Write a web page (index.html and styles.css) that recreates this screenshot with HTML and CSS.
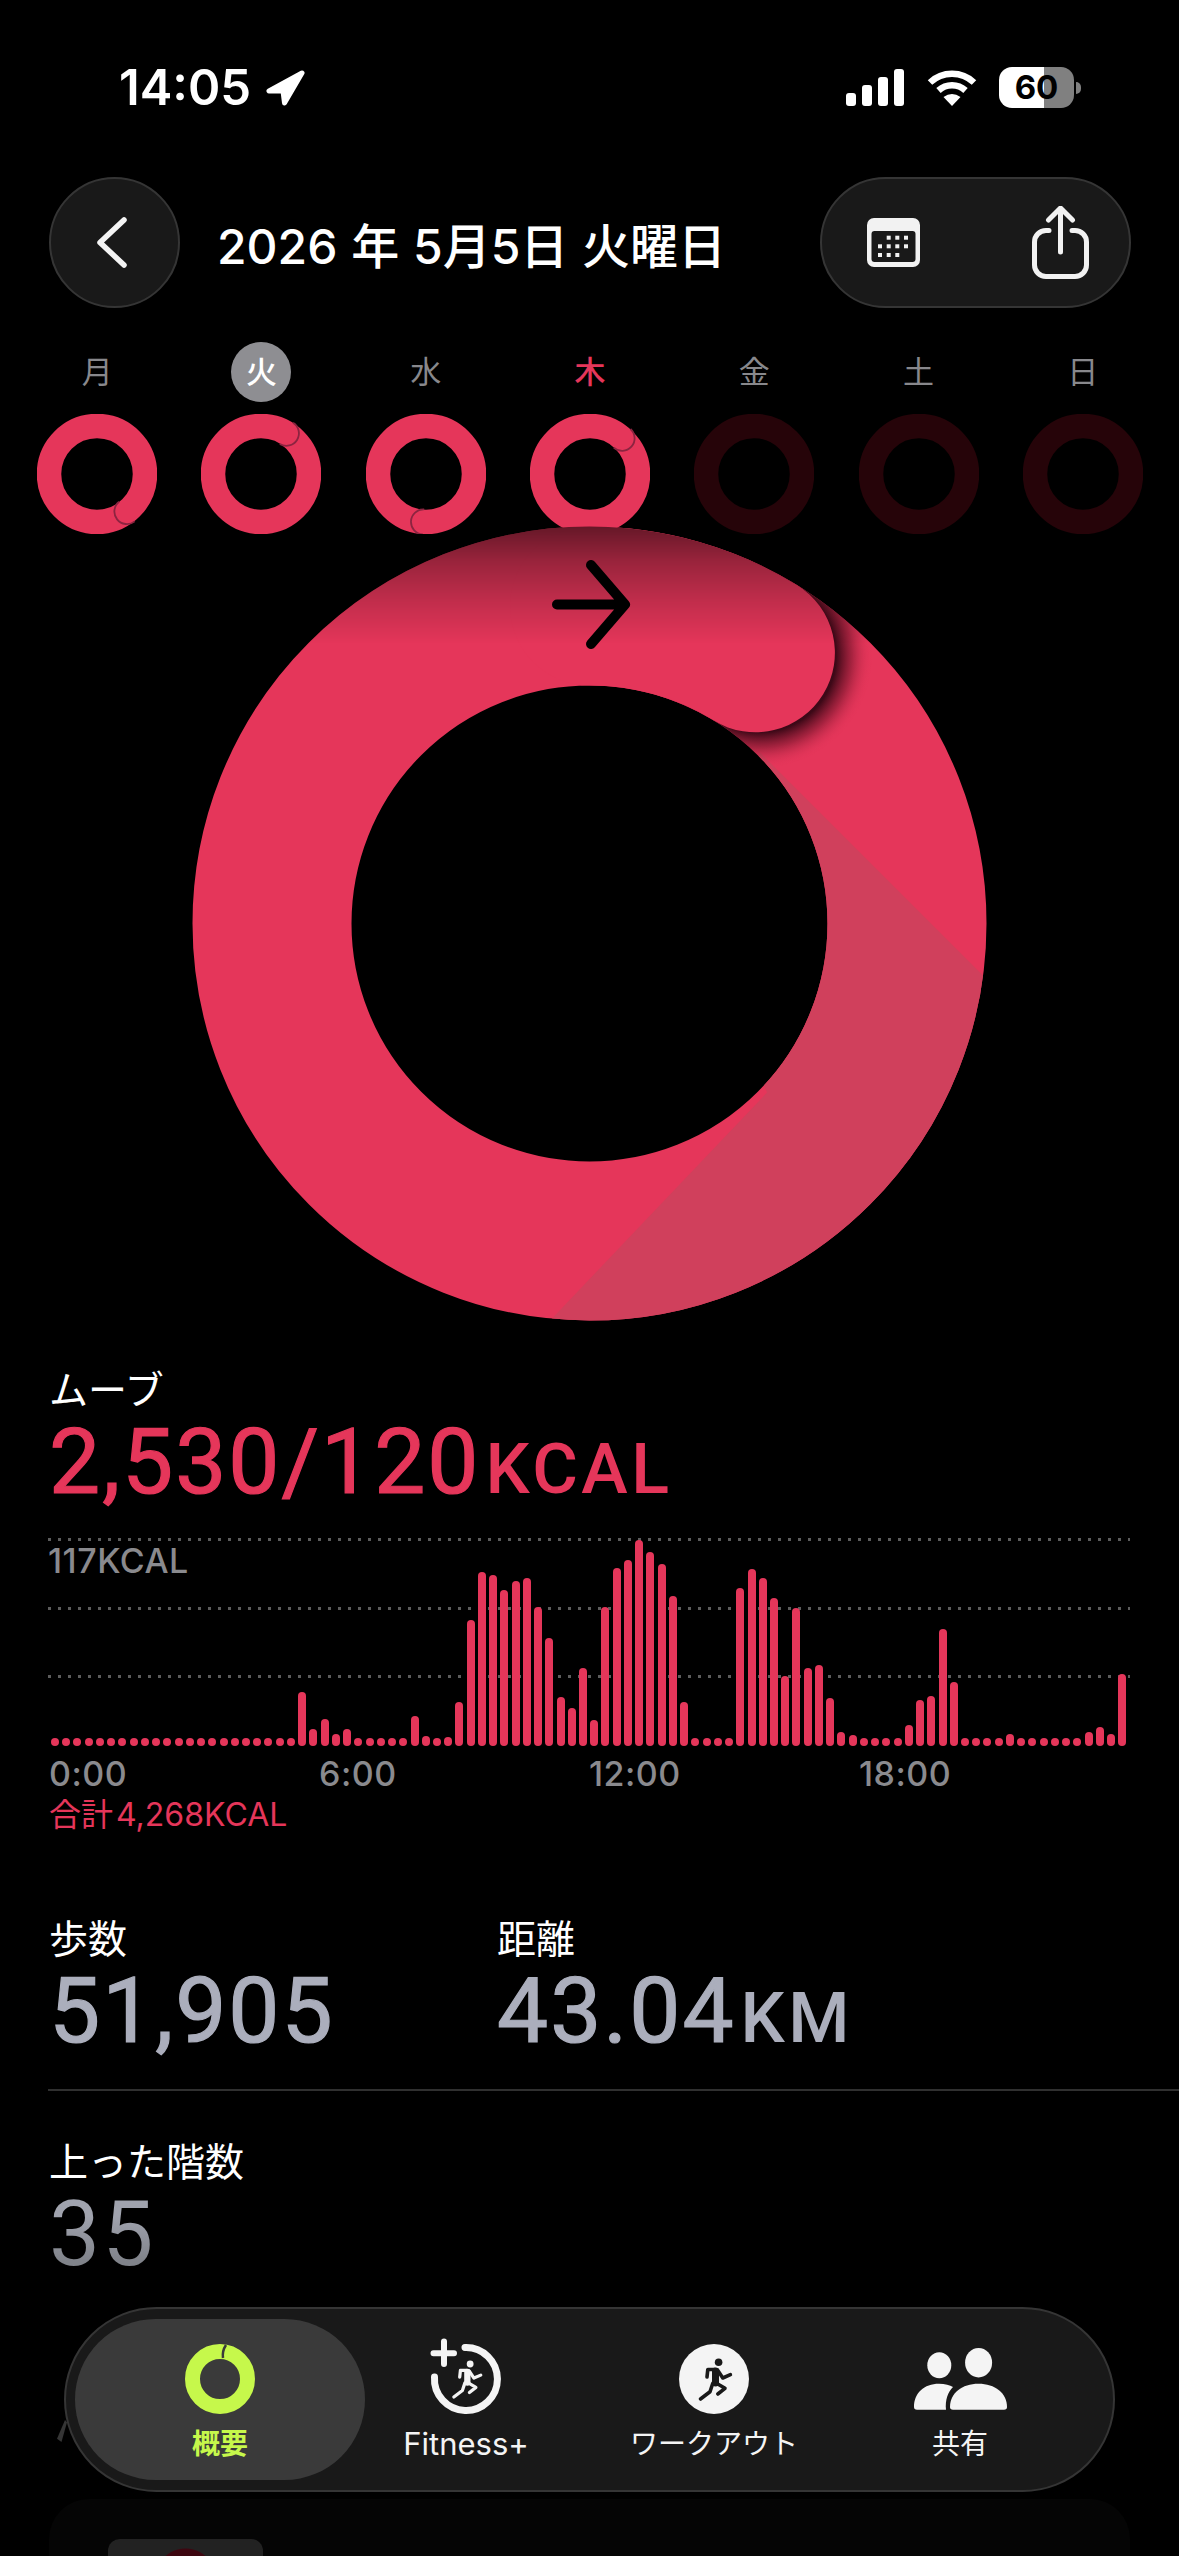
FILE: index.html
```html
<!DOCTYPE html>
<html lang="ja">
  <head>
    <meta charset="UTF-8" />
    <meta name="viewport" content="width=device-width, initial-scale=1.0" />
    <title>アクティビティ</title>
    <link rel="stylesheet" href="styles.css">
  </head>
  <body>
    <svg class="defs" width="0" height="0">
      <symbol id="runner" viewBox="0 0 70 70" overflow="visible">
        <circle class="runner-head" cx="39.6" cy="18.3" r="3.8" />
        <path class="runner-body" d="M36.5 27V39" />
        <path class="runner-limb" d="M36 25.5H28.8L28 33M38.5 26L43.8 34L51.4 30.7M37.5 39.3L46 44.3L38.8 50M33.8 39.3L31 47.7L21.5 55" />
      </symbol>
    </svg>

    <div class="status">
      <div class="clock">
        <span>14:05</span>
        <svg class="loc" viewBox="0 0 39 36"><path d="M36 3L3 21H17L18.500 33Z" /></svg>
      </div>
      <div class="status-right">
        <svg class="signal" viewBox="0 0 58 37">
          <rect x="0" y="24" width="10" height="13" rx="3" />
          <rect x="16" y="16" width="10" height="21" rx="3" />
          <rect x="32" y="8" width="10" height="29" rx="3" />
          <rect x="48" y="0" width="10" height="37" rx="3" />
        </svg>
        <svg class="wifi" viewBox="0 0 50 37">
          <path class="wifi-arc" d="M3 13.500A32 32 0 0 1 47 13.500" />
          <path class="wifi-arc" d="M11.500 21.500A20 20 0 0 1 38.500 21.500" />
          <path d="M16.500 28Q25 22 33.500 28L25 37Z" />
        </svg>
        <div class="battery">60</div>
        <div class="battery-nub"></div>
      </div>
    </div>

    <div class="header">
      <button class="glass back">
        <svg viewBox="0 0 30 51"><path d="M27 3L3 25.500L27 48" /></svg>
      </button>
      <div class="title">2026 年 5月5日 火曜日</div>
      <div class="glass actions">
        <svg class="calendar" viewBox="0 0 53 49">
          <rect class="cal-body" width="53" height="49" rx="7" />
          <rect class="cal-inner" x="4.500" y="13" width="44" height="31" rx="3" />
          <g class="cal-dots">
            <rect x="19.700" y="17.700" width="4" height="4" />
            <rect x="28.300" y="17.700" width="4" height="4" />
            <rect x="37" y="17.700" width="4" height="4" />
            <rect x="11" y="26.300" width="4" height="4" />
            <rect x="19.700" y="26.300" width="4" height="4" />
            <rect x="28.300" y="26.300" width="4" height="4" />
            <rect x="37" y="26.300" width="4" height="4" />
            <rect x="11" y="35" width="4" height="4" />
            <rect x="19.700" y="35" width="4" height="4" />
            <rect x="28.300" y="35" width="4" height="4" />
          </g>
        </svg>
        <svg class="share" viewBox="0 0 57 73">
          <path d="M17 24.500H14A11.500 11.500 0 0 0 2.500 36V59A11.500 11.500 0 0 0 14 70.500H43A11.500 11.500 0 0 0 54.500 59V36A11.500 11.500 0 0 0 43 24.500H40" />
          <path d="M28.500 46V3M16.500 14L28.500 2L40.500 14" />
        </svg>
      </div>
    </div>

    <div class="week">
      <div class="day">
        <span class="day-name">月</span>
        <svg class="mini" viewBox="0 0 120 120">
          <circle class="mini-track" cx="60" cy="60" r="48" />
          <g transform="rotate(141.500 60 60)"><path class="mini-edge" d="M60 -0.500A12.500 12.500 0 0 1 60 24.500" /></g>
        </svg>
      </div>
      <div class="day">
        <span class="day-name today">火</span>
        <svg class="mini" viewBox="0 0 120 120">
          <circle class="mini-track" cx="60" cy="60" r="48" />
          <g transform="rotate(32 60 60)"><path class="mini-edge" d="M60 -0.500A12.500 12.500 0 0 1 60 24.500" /></g>
        </svg>
      </div>
      <div class="day">
        <span class="day-name">水</span>
        <svg class="mini" viewBox="0 0 120 120">
          <circle class="mini-track" cx="60" cy="60" r="48" />
          <g transform="rotate(183 60 60)"><path class="mini-edge" d="M60 -0.500A12.500 12.500 0 0 1 60 24.500" /></g>
        </svg>
      </div>
      <div class="day">
        <span class="day-name hot">木</span>
        <svg class="mini" viewBox="0 0 120 120">
          <circle class="mini-track" cx="60" cy="60" r="48" />
          <g transform="rotate(42 60 60)"><path class="mini-edge" d="M60 -0.500A12.500 12.500 0 0 1 60 24.500" /></g>
        </svg>
      </div>
      <div class="day">
        <span class="day-name">金</span>
        <svg class="mini" viewBox="0 0 120 120"><circle class="mini-track off" cx="60" cy="60" r="48" /></svg>
      </div>
      <div class="day">
        <span class="day-name">土</span>
        <svg class="mini" viewBox="0 0 120 120"><circle class="mini-track off" cx="60" cy="60" r="48" /></svg>
      </div>
      <div class="day">
        <span class="day-name">日</span>
        <svg class="mini" viewBox="0 0 120 120"><circle class="mini-track off" cx="60" cy="60" r="48" /></svg>
      </div>
    </div>

    <svg class="big-ring" viewBox="0 0 795 795">
      <defs>
        <mask id="ringMask">
          <circle cx="397.500" cy="397.500" r="317.500" fill="none" stroke="#fff" stroke-width="159" />
        </mask>
        <radialGradient id="capShadow" gradientUnits="userSpaceOnUse" cx="568" cy="130" r="112">
          <stop offset="0.68" stop-color="#2a0410" stop-opacity="0.9" />
          <stop offset="0.82" stop-color="#5a0d20" stop-opacity="0.45" />
          <stop offset="1" stop-color="#e5365a" stop-opacity="0" />
        </radialGradient>
        <linearGradient id="topDim" x1="0" y1="0" x2="0" y2="1">
          <stop offset="0" stop-color="#000" stop-opacity="0.56" />
          <stop offset="0.3" stop-color="#000" stop-opacity="0.33" />
          <stop offset="0.65" stop-color="#000" stop-opacity="0.15" />
          <stop offset="1" stop-color="#000" stop-opacity="0" />
        </linearGradient>
      </defs>
      <circle class="big-track" cx="397.500" cy="397.500" r="317.500" />
      <g mask="url(#ringMask)">
        <polygon class="big-wedge" points="568,226.500 1008,666.500 1000,1100 8,1162.500 575,566.500 500,400" />
        <circle cx="568" cy="130" r="112" fill="url(#capShadow)" />
      </g>
      <path class="big-head" d="M397.500 80A317.500 317.500 0 0 1 563.400 126.800" />
      <g mask="url(#ringMask)">
        <rect x="0" y="0" width="795" height="118" fill="url(#topDim)" />
      </g>
      <path class="big-arrow" d="M365 78.500H433M399 39L433 78.500L399 118" />
    </svg>

    <div class="section move">
      <div class="label">ムーブ</div>
      <div class="value red">2,530/120<span class="unit">KCAL</span></div>
    </div>

    <div class="chart">
      <div class="chart-line"></div>
      <div class="chart-line"></div>
      <div class="chart-line"></div>
      <div class="chart-max">117KCAL</div>
      <div class="bars" id="bars"></div>
    </div>
    <div class="axis">
      <span>0:00</span>
      <span>6:00</span>
      <span>12:00</span>
      <span>18:00</span>
    </div>
    <div class="total">合計 4,268KCAL</div>

    <div class="section stats">
      <div class="stat">
        <div class="label">歩数</div>
        <div class="value">51,905</div>
      </div>
      <div class="stat">
        <div class="label">距離</div>
        <div class="value">43.04<span class="unit">KM</span></div>
      </div>
    </div>
    <div class="divider"></div>
    <div class="section floors">
      <div class="label">上った階数</div>
      <div class="value fade">35</div>
    </div>

    <div class="card">
      <div class="thumb"></div>
    </div>

    <div class="tabbar">
      <div class="tab active">
        <svg class="tab-icon" viewBox="0 0 70 70">
          <circle class="summary-ring" cx="35" cy="35" r="27.500" />
          <path class="summary-edge" d="M41 1Q37 7 38 14" />
        </svg>
        <span>概要</span>
      </div>
      <div class="tab">
        <svg class="tab-icon" viewBox="0 0 70 70" overflow="visible">
          <path class="fit-ring" d="M34 3.500A31.500 31.500 0 1 1 3.500 33" />
          <path class="fit-plus" d="M13 -2.500V20M2.500 9.300H23" />
          <use class="fit-runner" href="#runner" x="3.500" y="3.500" width="63" height="63" />
        </svg>
        <span class="latin">Fitness+</span>
      </div>
      <div class="tab">
        <svg class="tab-icon" viewBox="0 0 70 70">
          <circle class="workout-disc" cx="35" cy="35" r="35" />
          <use class="workout-runner" href="#runner" width="70" height="70" />
        </svg>
        <span>ワークアウト</span>
      </div>
      <div class="tab">
        <svg class="tab-icon people" viewBox="0 0 93 62">
          <ellipse cx="25.300" cy="17.300" rx="12" ry="13" />
          <ellipse cx="64.600" cy="14.700" rx="13.500" ry="14.700" />
          <path d="M36 59C36 45 48 35.700 64.500 35.700C81 35.700 93 45 93 59Q93 61.700 90 61.700H39Q36 61.700 36 59Z" />
          <path d="M0 59C0 45 10 35.700 25 35.700C31 35.700 36 37 39 39C34 44 31 52 32 61.700H3Q0 61.700 0 59Z" />
        </svg>
        <span>共有</span>
      </div>
    </div>

    <script src="chart.js"></script>
  </body>
</html>
```

FILE: styles.css
```css
* {
  box-sizing: border-box;
}
body {
  margin: 0;
  width: 1179px;
  height: 2556px;
  overflow: hidden;
  position: relative;
  background-color: #000;
  color: #fff;
  font-family: Inter, "Noto Sans CJK JP", sans-serif;
}
.defs {
  position: absolute;
}
.runner-head {
  fill: currentColor;
}
.runner-body {
  fill: none;
  stroke: currentColor;
  stroke-width: 7;
  stroke-linecap: round;
}
.runner-limb {
  fill: none;
  stroke: currentColor;
  stroke-width: 3.6;
  stroke-linecap: round;
  stroke-linejoin: round;
}

/* status bar */
.status {
  display: flex;
  justify-content: space-between;
  height: 177px;
  padding: 67px 98px 0 119px;
}
.clock {
  display: flex;
  align-items: flex-start;
  gap: 15px;
  font-size: 49px;
  font-weight: 600;
  line-height: 41px;
}
.loc {
  width: 39px;
  height: 36px;
  margin-top: 3px;
  fill: #fff;
  stroke: #fff;
  stroke-width: 5;
  stroke-linejoin: round;
}
.status-right {
  display: flex;
  align-items: flex-start;
}
.signal {
  width: 58px;
  height: 37px;
  margin: 2px 23px 0 0;
  fill: #fff;
}
.wifi {
  width: 50px;
  height: 37px;
  margin: 2px 22px 0 0;
  fill: #fff;
}
.wifi-arc {
  fill: none;
  stroke: #fff;
  stroke-width: 6.500;
}
.battery {
  width: 75px;
  height: 41px;
  border-radius: 13px;
  background: linear-gradient(90deg, #fff 60%, #808080 60%);
  color: #000;
  font-size: 33px;
  font-weight: 700;
  line-height: 41px;
  text-align: center;
}
.battery-nub {
  width: 5px;
  height: 12px;
  margin: 15px 0 0 2px;
  border-radius: 0 5px 5px 0;
  background-color: #808080;
}

/* header */
.header {
  display: flex;
  align-items: center;
  height: 131px;
  padding: 0 48px 0 49px;
}
.glass {
  height: 131px;
  border: 2px solid #353535;
  border-radius: 66px;
  background-color: #191919;
}
.back {
  display: flex;
  align-items: center;
  justify-content: center;
  width: 131px;
  padding: 0 6px 0 0;
}
.back svg {
  width: 30px;
  height: 51px;
  fill: none;
  stroke: #f4f4f4;
  stroke-width: 5.500;
  stroke-linecap: round;
  stroke-linejoin: round;
}
.title {
  margin-left: 37px;
  font-size: 48px;
  font-weight: 500;
  word-spacing: 1px;
  white-space: nowrap;
}
.actions {
  display: flex;
  align-items: center;
  gap: 112px;
  width: 311px;
  margin-left: auto;
  padding-left: 45px;
}
.calendar {
  width: 53px;
  height: 49px;
}
.cal-body,
.cal-dots {
  fill: #f2f2f2;
}
.cal-inner {
  fill: #191919;
}
.share {
  width: 57px;
  height: 73px;
  fill: none;
  stroke: #f2f2f2;
  stroke-width: 5;
  stroke-linecap: round;
  stroke-linejoin: round;
}

/* week strip */
.week {
  display: grid;
  grid-template-columns: repeat(7, 1fr);
  margin-top: 34px;
  padding: 0 14px 0 15px;
}
.day {
  display: flex;
  flex-direction: column;
  align-items: center;
  gap: 12px;
}
.day-name {
  width: 60px;
  height: 60px;
  border-radius: 50%;
  color: #88888c;
  font-size: 31px;
  line-height: 60px;
  text-align: center;
}
.day-name.today {
  background-color: #8e8e92;
  color: #fff;
  font-weight: 500;
}
.day-name.hot {
  color: #e5365a;
  font-weight: 500;
}
.mini {
  display: block;
  width: 120px;
  height: 120px;
}
.mini-track {
  fill: none;
  stroke: #e5365a;
  stroke-width: 24.500;
}
.mini-track.off {
  stroke: #260409;
}
.mini-edge {
  fill: none;
  stroke: #8c2440;
  stroke-width: 1.800;
}

/* big ring */
.big-ring {
  display: block;
  width: 795px;
  height: 795px;
  margin: -8px auto 0;
}
.big-track,
.big-head {
  fill: none;
  stroke: #e5365a;
  stroke-width: 159;
}
.big-head {
  stroke-linecap: round;
}
.big-wedge {
  fill: #d0405c;
}
.big-arrow {
  fill: none;
  stroke: #000;
  stroke-width: 10;
  stroke-linecap: round;
  stroke-linejoin: round;
}

/* numbers */
.section {
  padding: 0 49px;
}
.move {
  padding-top: 45px;
}
.label {
  font-size: 39px;
  line-height: 48px;
}
.value {
  margin-top: 3px;
  color: #abaebc;
  font-family: Roboto, sans-serif;
  font-size: 91px;
  font-weight: 400;
  letter-spacing: 2px;
  line-height: 90px;
  white-space: nowrap;
  -webkit-text-stroke: 1.200px currentColor;
}
.value.red {
  color: #e5365a;
}
.value.fade {
  background: linear-gradient(180deg, #a0a3ae 30%, #80838a 80%);
  background-clip: text;
  -webkit-background-clip: text;
  color: transparent;
  display: inline-block;
  -webkit-text-stroke: 0;
}
.unit {
  margin-left: 5px;
  font-size: 70px;
  font-weight: 500;
  letter-spacing: 3.500px;
  -webkit-text-stroke: 0;
}

/* chart */
.chart {
  position: relative;
  display: flex;
  flex-direction: column;
  justify-content: space-between;
  width: 1082px;
  height: 208px;
  margin: 24px 0 0 48px;
}
.chart-line {
  height: 3px;
  background: linear-gradient(90deg, #5c5c5c 3px, transparent 3px) 0 0 / 10px 3px repeat-x;
}
.chart-line:nth-child(3) {
  margin-bottom: 68px;
}
.chart-max {
  position: absolute;
  top: 4px;
  left: 0;
  color: #8a8a8e;
  font-size: 34px;
  font-weight: 500;
  letter-spacing: 0.500px;
  line-height: 38px;
}
.bars {
  position: absolute;
  left: 3px;
  right: 3px;
  bottom: 0;
  display: flex;
  align-items: flex-end;
  justify-content: space-between;
}
.bar {
  width: 8px;
  border-radius: 4px;
  background-color: #e5365a;
}
.axis {
  display: grid;
  grid-template-columns: repeat(4, 270px);
  margin: 9px 0 0 49px;
  color: #8a8a8e;
  font-size: 34px;
  font-weight: 500;
  letter-spacing: 0.500px;
  line-height: 38px;
}
.total {
  margin: 0 0 0 49px;
  color: #e5365a;
  font-size: 32px;
  word-spacing: -6px;
  line-height: 44px;
}

.stats {
  display: flex;
  margin-top: 78px;
}
.stat {
  width: 448px;
}
.divider {
  height: 2px;
  margin: 26px 0 0 48px;
  background-color: #303030;
}
.floors {
  margin-top: 47px;
}

/* what scrolls under the tab bar */
.card {
  height: 120px;
  margin: 220px 49px 0;
  padding: 40px 0 0 59px;
  border-radius: 40px 40px 0 0;
  background-color: #050505;
}
.thumb {
  width: 155px;
  height: 40px;
  border-radius: 12px 12px 0 0;
  background: radial-gradient(circle at 50% 100%, #3d0610 0, #3d0610 30px, #222 31px);
}

/* tab bar */
.tabbar {
  position: absolute;
  top: 2307px;
  left: 64px;
  display: grid;
  grid-template-columns: 290px 202px 294px 198px;
  width: 1051px;
  height: 185px;
  padding: 10px 0 10px 9px;
  border: 2px solid #353535;
  border-radius: 93px;
  background-color: #191919;
  color: #f4f4f4;
  font-size: 28px;
  line-height: 32px;
}
.tabbar::before {
  content: "";
  position: absolute;
  top: 111px;
  left: -9px;
  width: 10px;
  height: 22px;
  background-color: #353535;
  clip-path: polygon(80% 0, 100% 10%, 45% 100%, 0 85%);
}
.tab {
  display: flex;
  flex-direction: column;
  align-items: center;
  gap: 14px;
  padding-top: 25px;
  white-space: nowrap;
}
.tab .latin {
  font-size: 31px;
  font-weight: 400;
}
.tab.active {
  border-radius: 81px;
  background-color: #3a3a3a;
  color: #c6f84b;
  font-weight: 700;
}
.tab-icon {
  display: block;
  width: 70px;
  height: 70px;
}
.tab-icon.people {
  width: 93px;
  height: 62px;
  margin: 4px 0;
  fill: #f4f4f4;
}
.summary-ring {
  fill: none;
  stroke: #c6f84b;
  stroke-width: 15;
}
.summary-edge {
  fill: none;
  stroke: #3a3a3a;
  stroke-width: 2.500;
}
.fit-ring,
.fit-plus {
  fill: none;
  stroke: #f4f4f4;
  stroke-linecap: round;
}
.fit-ring {
  stroke-width: 7;
}
.fit-plus {
  stroke-width: 6;
}
.fit-runner {
  color: #f4f4f4;
}
.workout-disc {
  fill: #f4f4f4;
}
.workout-runner {
  color: #191919;
}
```

FILE: chart.js
```js
// height of each 15 minute bar, in pixels
const heights = [
  8, 8, 8, 8, 8, 8, 8, 8, 8, 8, 8, 8, 8, 8, 8, 8, 8, 8, 8, 8, 8, 8, 54, 17,
  27, 12, 17, 8, 8, 8, 8, 8, 30, 10, 8, 9, 44, 126, 174, 171, 156, 165, 168, 139, 108, 49, 38, 78,
  26, 139, 178, 186, 206, 194, 182, 150, 44, 8, 8, 8, 8, 158, 177, 168, 148, 70, 138, 78, 81, 48, 14, 11,
  8, 8, 8, 8, 21, 46, 50, 117, 64, 8, 8, 8, 8, 12, 8, 8, 8, 8, 8, 8, 14, 19, 12, 72,
];

const bars = document.getElementById("bars");
heights.forEach((h) => {
  const bar = document.createElement("div");
  bar.className = "bar";
  bar.style.height = h + "px";
  bars.appendChild(bar);
});
```
